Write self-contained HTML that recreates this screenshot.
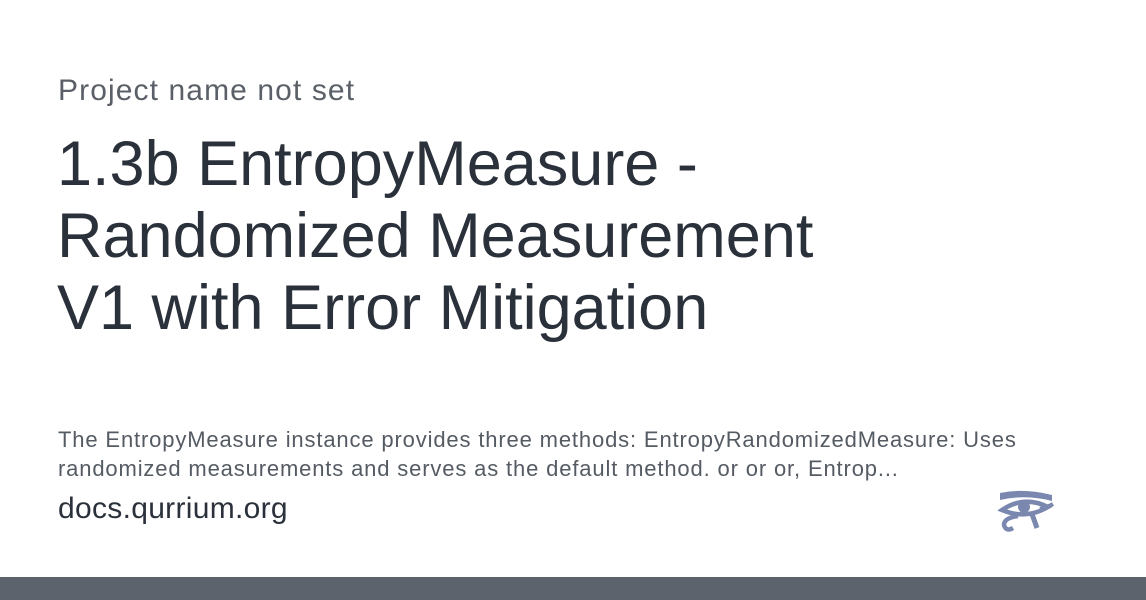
<!DOCTYPE html>
<html><head><style>
body{margin:0;width:1146px;height:600px;background:#fff;position:relative;overflow:hidden;font-family:"Liberation Sans",Arial,sans-serif}
.p{position:absolute;left:58px;font-size:30px;color:#5b6068;top:74px;letter-spacing:1.1px}
.t{position:absolute;left:57px;top:128px;font-size:63px;line-height:72px;color:#2b313b;width:800px}
.d{position:absolute;left:58px;top:425px;font-size:22px;line-height:29px;color:#555b63;width:1010px;letter-spacing:0.85px}
.u{position:absolute;left:58px;top:492px;font-size:30px;color:#2b313b;letter-spacing:0.3px}
.bar{position:absolute;left:0;top:577px;width:1146px;height:23px;background:#5c636c}
</style></head><body>
<div class="p">Project name not set</div>
<div class="t">1.3b EntropyMeasure - Randomized Measurement V1 with Error Mitigation</div>
<div class="d">The EntropyMeasure instance provides three methods: EntropyRandomizedMeasure: Uses randomized measurements and serves as the default method. or or or, Entrop...</div>
<div class="u">docs.qurrium.org</div>
<svg style="position:absolute;left:996px;top:490px" width="60" height="42" viewBox="0 0 60 42">
<g fill="#7a88b0" stroke="#7a88b0">
<path d="M4 3 Q28 -2 56 5 L56 11 Q30 4 4 10Z" stroke="none"/>
<path d="M6 20 Q28 5 52 17 Q30 30 6 20Z" fill="none" stroke-width="4.5"/>
<circle cx="28" cy="17" r="6" stroke="none"/>
<path d="M22 26 Q8 28 8 35 Q10 42 17 38" fill="none" stroke-width="4.5"/>
<path d="M36 24 L41 38" fill="none" stroke-width="5"/>
<path d="M44 19 Q52 17 57 14" fill="none" stroke-width="4"/>
</g></svg>
<div class="bar"></div>
</body></html>
